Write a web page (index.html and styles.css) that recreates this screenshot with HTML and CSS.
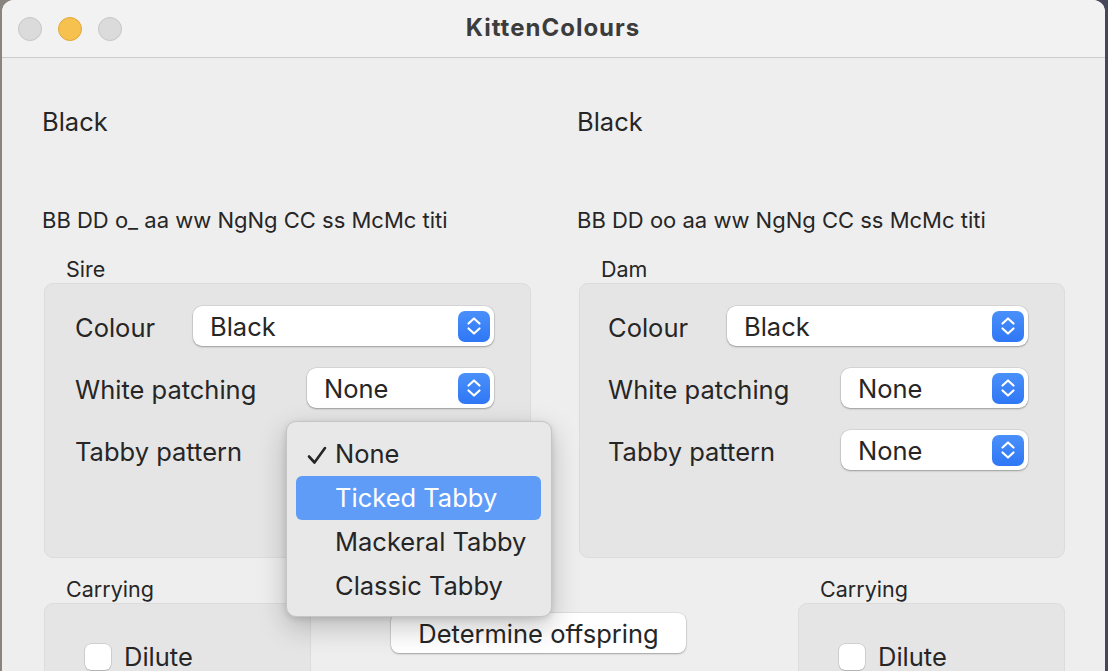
FILE: index.html
```html
<!DOCTYPE html>
<html>
<head>
<meta charset="utf-8">
<link rel="stylesheet" href="styles.css">
</head>
<body>
<div class="window">
  <div class="titlebar">
    <div class="lights">
      <span class="light grey"></span>
      <span class="light yellow"></span>
      <span class="light grey"></span>
    </div>
    <div class="title">KittenColours</div>
    <div></div>
  </div>
  <div class="content">
    <div class="parents">
      <div class="parent">
        <div class="name">Black</div>
        <div class="geno">BB DD o_ aa ww NgNg CC ss McMc titi</div>
        <div class="group-label">Sire</div>
        <div class="group">
          <div class="row">
            <span class="label">Colour</span>
            <div class="popup wide"><span>Black</span><span class="stepper"><svg width="32" height="32" viewBox="0 0 32 32"><path d="M10.5 13.5 L16 8.5 L21.5 13.5 M10.5 18.5 L16 23.5 L21.5 18.5" fill="none" stroke="#fff" stroke-width="2.2" stroke-linecap="round" stroke-linejoin="round"/></svg></span></div>
          </div>
          <div class="row">
            <span class="label">White patching</span>
            <div class="popup"><span>None</span><span class="stepper"><svg width="32" height="32" viewBox="0 0 32 32"><path d="M10.5 13.5 L16 8.5 L21.5 13.5 M10.5 18.5 L16 23.5 L21.5 18.5" fill="none" stroke="#fff" stroke-width="2.2" stroke-linecap="round" stroke-linejoin="round"/></svg></span></div>
          </div>
          <div class="row">
            <span class="label">Tabby pattern</span>
            <div class="popup covered"></div>
          </div>
        </div>
      </div>
      <div class="parent dam">
        <div class="name">Black</div>
        <div class="geno">BB DD oo aa ww NgNg CC ss McMc titi</div>
        <div class="group-label">Dam</div>
        <div class="group">
          <div class="row">
            <span class="label">Colour</span>
            <div class="popup wide"><span>Black</span><span class="stepper"><svg width="32" height="32" viewBox="0 0 32 32"><path d="M10.5 13.5 L16 8.5 L21.5 13.5 M10.5 18.5 L16 23.5 L21.5 18.5" fill="none" stroke="#fff" stroke-width="2.2" stroke-linecap="round" stroke-linejoin="round"/></svg></span></div>
          </div>
          <div class="row">
            <span class="label">White patching</span>
            <div class="popup"><span>None</span><span class="stepper"><svg width="32" height="32" viewBox="0 0 32 32"><path d="M10.5 13.5 L16 8.5 L21.5 13.5 M10.5 18.5 L16 23.5 L21.5 18.5" fill="none" stroke="#fff" stroke-width="2.2" stroke-linecap="round" stroke-linejoin="round"/></svg></span></div>
          </div>
          <div class="row">
            <span class="label">Tabby pattern</span>
            <div class="popup"><span>None</span><span class="stepper"><svg width="32" height="32" viewBox="0 0 32 32"><path d="M10.5 13.5 L16 8.5 L21.5 13.5 M10.5 18.5 L16 23.5 L21.5 18.5" fill="none" stroke="#fff" stroke-width="2.2" stroke-linecap="round" stroke-linejoin="round"/></svg></span></div>
          </div>
        </div>
      </div>
    </div>
    <div class="bottom">
      <div class="carry">
        <div class="group-label">Carrying</div>
        <div class="carry-box">
          <label class="check"><span class="box"></span><span>Dilute</span></label>
        </div>
      </div>
      <div class="button">Determine offspring</div>
      <div class="carry">
        <div class="group-label">Carrying</div>
        <div class="carry-box">
          <label class="check"><span class="box"></span><span>Dilute</span></label>
        </div>
      </div>
    </div>
  </div>
  <div class="menu">
    <div class="item"><svg class="tick" width="24" height="24" viewBox="0 0 24 24"><path d="M4 12.5 L9.5 18.5 L20 4" fill="none" stroke="#262626" stroke-width="2.6" stroke-linecap="round" stroke-linejoin="round"/></svg>None</div>
    <div class="item selected">Ticked Tabby</div>
    <div class="item">Mackeral Tabby</div>
    <div class="item">Classic Tabby</div>
  </div>
</div>
</body>
</html>
```
FILE: styles.css
```css
* { box-sizing: border-box; }
html, body {
  margin: 0;
  width: 1108px;
  height: 671px;
  overflow: hidden;
}
body {
  background: linear-gradient(90deg, #8a8480 0%, #5c5a62 60%, #454759 100%);
  font-family: Inter, "Noto Sans", "Liberation Sans", sans-serif;
  color: #262626;
}
.window {
  position: relative;
  margin-left: 2px;
  width: 1103px;
  height: 720px;
  background: #efeeef;
  border-radius: 12px 12px 0 0;
  overflow: hidden;
}
.titlebar {
  height: 58px;
  background: #f3f2f3;
  border-bottom: 1px solid #cdcccd;
  display: grid;
  grid-template-columns: 1fr auto 1fr;
  align-items: center;
  padding-left: 16px;
}
.lights { display: flex; gap: 16px; }
.light {
  width: 24px;
  height: 24px;
  border-radius: 50%;
  display: block;
}
.light.grey { background: #dcdbdc; border: 1px solid #c7c6c7; }
.light.yellow { background: #f6c14f; border: 1px solid #dfa93a; }
.title {
  font-weight: 700;
  font-size: 24px;
  color: #3c3c3c;
  letter-spacing: 1px;
  margin-left: -17px;
  margin-top: -2px;
}
.content {
  padding: 49px 40px 0 42px;
}
.parents {
  display: grid;
  grid-template-columns: 487px 486px;
  column-gap: 48px;
}
.name {
  font-size: 25.5px;
  line-height: 30px;
  height: 30px;
  margin-left: -2px;
}
.geno {
  font-size: 22px;
  line-height: 26px;
  margin-top: 70px;
  margin-left: -2px;
}
.group-label {
  font-size: 21.5px;
  line-height: 26px;
  margin: 23px 0 1px 22px;
}
.group {
  height: 275px;
  background: #e6e5e6;
  border: 1px solid #dddcdd;
  border-radius: 9px;
  padding: 22px 36px 0 30px;
  display: flex;
  flex-direction: column;
  gap: 22px;
}
.dam .group { padding-left: 28px; }
.row {
  display: flex;
  justify-content: space-between;
  align-items: center;
  height: 40px;
}
.label { font-size: 25.5px; margin-top: 2px; }
.popup {
  width: 187px;
  height: 40px;
  background: #fff;
  border-radius: 9px;
  box-shadow: 0 0 0 0.5px rgba(0,0,0,0.12), 0 1px 2px rgba(0,0,0,0.28);
  display: flex;
  align-items: center;
  justify-content: space-between;
  padding: 0 4px 0 17px;
  font-size: 25.5px;
}
.popup.wide { width: 301px; }
.popup.covered { visibility: hidden; }
.stepper {
  width: 32px;
  height: 31px;
  border-radius: 7px;
  background: linear-gradient(#4a90fa, #2f77f5);
  display: flex;
  align-items: center;
  justify-content: center;
}
.bottom {
  display: flex;
  align-items: flex-start;
}
.bottom .group-label { margin-top: 18px; }
.carry { width: 267px; }
.carry-box {
  height: 120px;
  background: #e6e5e6;
  border: 1px solid #dddcdd;
  border-radius: 9px;
  padding: 37px 0 0 40px;
}
.check {
  display: flex;
  align-items: center;
  gap: 13px;
  font-size: 25.5px;
}
.box {
  width: 26px;
  height: 26px;
  background: #fff;
  border-radius: 6px;
  box-shadow: 0 0 0 0.5px rgba(0,0,0,0.18), 0 1px 1px rgba(0,0,0,0.15);
  display: block;
}
.button {
  margin: 55px 112px 0 80px;
  width: 295px;
  height: 40px;
  background: #fff;
  border-radius: 8px;
  box-shadow: 0 0 0 0.5px rgba(0,0,0,0.12), 0 1px 2px rgba(0,0,0,0.28);
  display: flex;
  align-items: center;
  justify-content: center;
  font-size: 25.5px;
}
.menu {
  position: absolute;
  left: 284px;
  top: 421px;
  width: 266px;
  height: 196px;
  background: #e9e8e9;
  border: 1px solid #c6c5c6;
  border-radius: 10px;
  box-shadow: 0 10px 28px rgba(0,0,0,0.22), 0 2px 6px rgba(0,0,0,0.12);
  padding: 10px 10px 0 9px;
}
.item {
  position: relative;
  height: 44px;
  line-height: 44px;
  font-size: 25.5px;
  padding-left: 39px;
  border-radius: 6px;
  color: #252525;
}
.item.selected {
  background: #5f9cf8;
  color: #fff;
}
.tick {
  position: absolute;
  left: 9px;
  top: 12px;
}
```
